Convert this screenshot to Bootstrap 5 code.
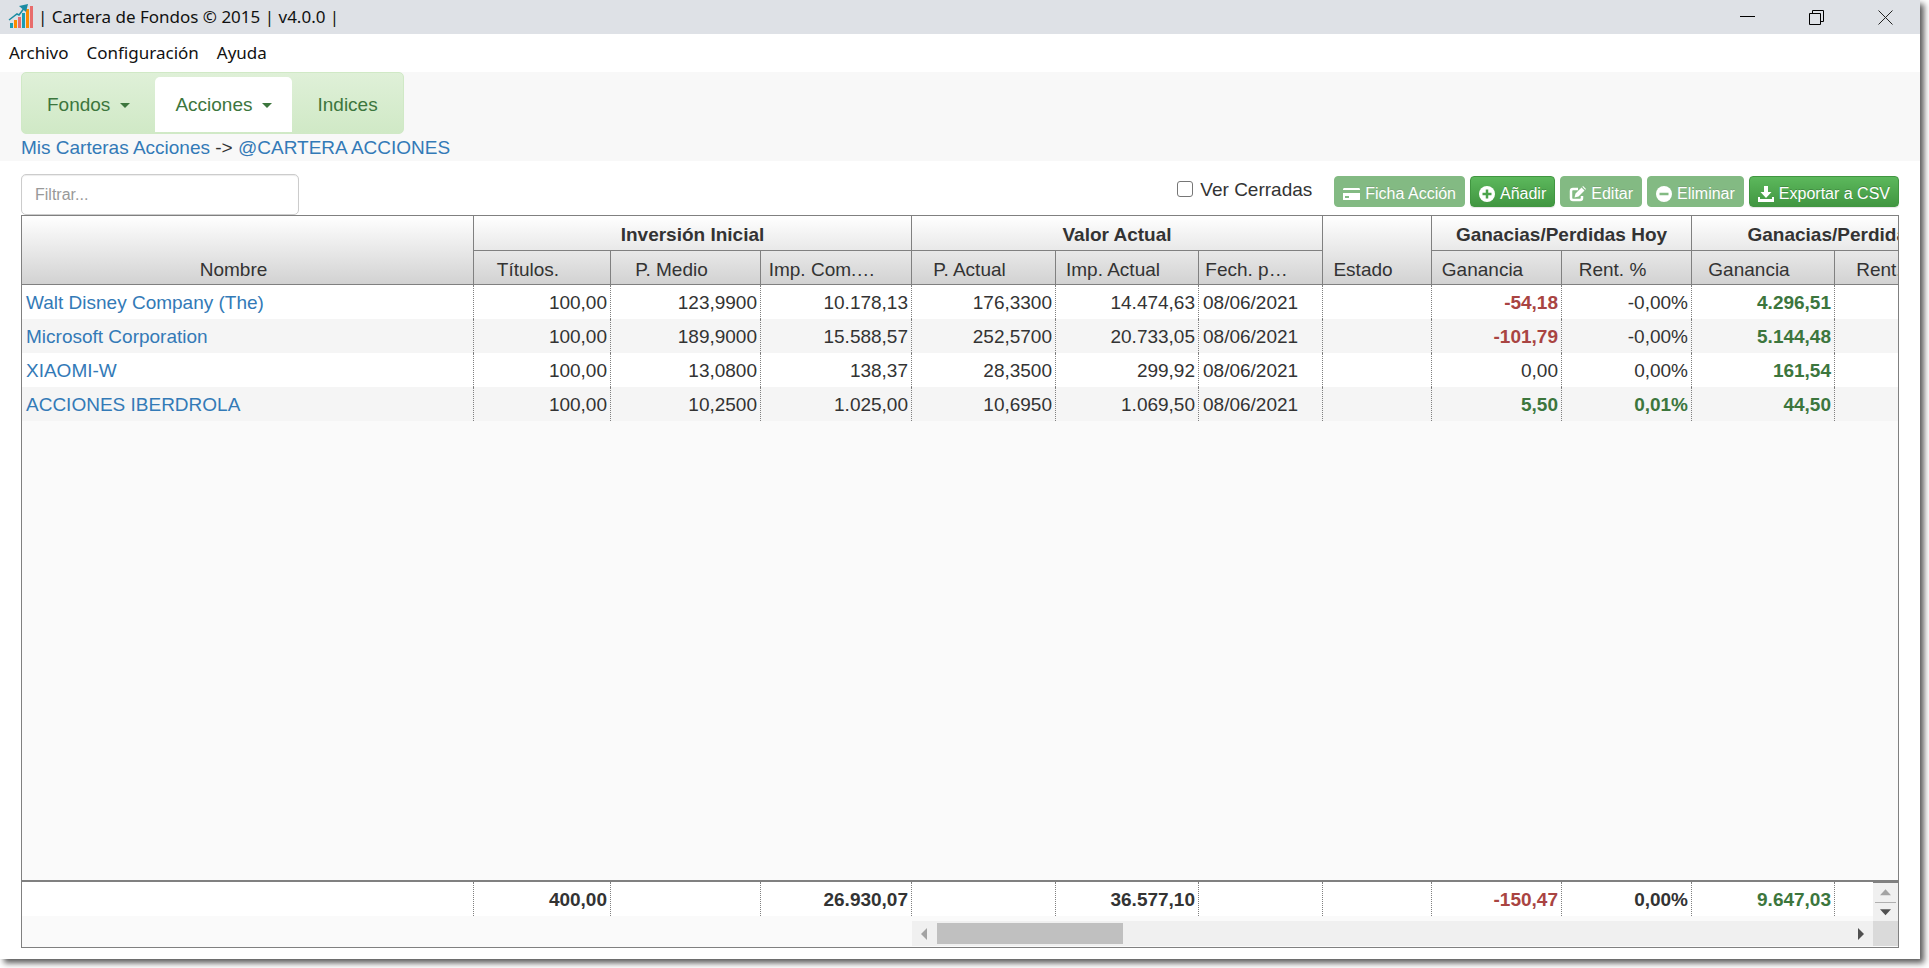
<!DOCTYPE html>
<html lang="es">
<head>
<meta charset="utf-8">
<meta name="viewport" content="width=device-width, initial-scale=1">
<title>Cartera de Fondos</title>
<link rel="stylesheet" href="https://cdn.jsdelivr.net/npm/bootstrap@5.3.0/dist/css/bootstrap.min.css">
<style>
  :root { --line: #808080; --ui: "Noto Sans", "Open Sans", sans-serif; }
  body { background: #fff; color: #333; font: 19px/27px "Liberation Sans", Arial, sans-serif; }
  a { color: #337ab7; text-decoration: none; }
  .app-frame { padding: 0 9px 9px 0; }
  .app-window { box-shadow: 4px 4px 6px rgba(0,0,0,.65); background: #fff; min-width: 0; }
  .title-bar { background: #dee1e6; height: 34px; padding-left: 8px; font: 17px/34px var(--ui); color: #111; }
  .win-btn { width: 69px; height: 34px; border: 0; background: none; padding: 0; line-height: 28px; }
  .menu-bar { height: 38px; padding-left: 9px; gap: 18px; font: 17px/38px var(--ui); }
  .menu-bar a { color: #111; }
  .nav-strip { background: #f8f8f8; height: 89px; padding-left: 21px; }
  .tab-set { border: 1px solid #d0e9c6; border-radius: 5px; background: linear-gradient(#dff0d8, #d0e9c6); height: 62px; padding-top: 4px; }
  .tab-set .nav-link { color: #3c763d; line-height: 27px; padding: 14px 25px; border-radius: 5px 5px 0 0; }
  .tab-set .nav-link.active { background: #fff; padding: 14px 20px; }
  .tab-set .dropdown-toggle::after { border-top-width: 5px; border-left-width: 5px; border-right-width: 5px; margin-left: 10px; vertical-align: 3px; }
  .work { padding: 13px 21px 11px; min-width: 0; }
  .filter-box { width: 278px; height: 41px; font-size: 16px; border-color: #ccc; border-radius: 5px; padding: 6px 13px; box-shadow: inset 0 1px 1px rgba(0,0,0,.075); }
  .filter-box::placeholder { color: #999; }
  .show-closed { height: 30px; gap: 7px; margin-right: 22px; }
  .show-closed .form-check-input { width: 16px; height: 16px; margin: 0; border-color: #767676; border-radius: 3px; }
  .tool-set { gap: 5px; padding-top: 2px; }
  .tool-btn { --bs-btn-color: #fff; --bs-btn-hover-color: #fff; --bs-btn-disabled-color: #fff; --bs-btn-border-color: #419641; --bs-btn-disabled-border-color: #419641; --bs-btn-disabled-opacity: .65;
    background: linear-gradient(#5cb85c, #419641); font-size: 16px; line-height: 19px; height: 31px; padding: 7px 8px 3px; border-radius: 4px; text-shadow: 0 -1px 0 rgba(0,0,0,.2); box-shadow: 0 1px 1px rgba(0,0,0,.1); gap: 5px; white-space: nowrap; }
  .tool-btn:disabled { background: #419641; box-shadow: none; }
  .data-grid { border: 1px solid var(--line); background: #fafafa; overflow: hidden; min-width: 0; }
  .data-grid table { table-layout: fixed; width: 1952px; border-collapse: separate; border-spacing: 0; }
  .grid-head { background: linear-gradient(#fff, #d2d2d2); border-bottom: 1px solid var(--line); }
  .grid-head th { height: 33px; padding: 0 34px 0 6px; font-weight: 400; text-align: center; vertical-align: bottom; line-height: 28px; border-right: 1px solid var(--line); white-space: nowrap; }
  .grid-head th.grp { height: 35px; padding: 0; font-weight: 700; line-height: 30px; border-bottom: 1px solid var(--line); }
  .grid-rows td { height: 34px; padding: 2px 3px 0 4px; line-height: 32px; text-align: right; border-right: 1px dotted var(--line); background: #fff; white-space: nowrap; }
  .grid-rows tr:nth-child(even) td { background: #f5f5f5; }
  .grid-rows td.txt { text-align: left; }
  .grid-rows td.up { color: #3c763d; font-weight: 700; }
  .grid-rows td.down { color: #a94442; font-weight: 700; }
  .grid-foot { border-top: 2px solid var(--line); }
  .foot-clip { overflow: hidden; min-width: 0; padding-bottom: 5px; }
  .v-bar { width: 25px; background: #f0f0f0; border-top: 1px solid var(--line); }
  .v-bar hr { margin: 0 2px; border-color: #a0a0a0; opacity: .8; }
  .h-row { height: 25px; margin-bottom: 1px; }
  .h-space { width: 890px; }
  .h-bar { background: #f0f0f0; gap: 10px; padding: 0 9px; }
  .h-thumb { width: 186px; height: 21px; background: #c0c0c0; }
  .h-end { width: 25px; background: #dadada; }
</style>
</head>
<body>
<div class="app-frame vh-100 d-flex">
<div class="app-window flex-grow-1 d-flex flex-column">
  <header class="title-bar d-flex align-items-center">
    <svg width="26" height="26" viewBox="0 0 26 26"><path fill="#1b9db3" d="M2 19h3v5H2zM14 9h3v15h-3z"/><path fill="#fb8c00" d="M6 16h3v8H6zM18 5h3v19h-3z"/><path fill="#e86c6c" d="M10 13h3v11h-3zM22 2h3v22h-3z"/><path d="M1 16L9 10 11 11 17 3" fill="none" stroke="#1b8ca3" stroke-width="1.500"/><path fill="#1b8ca3" d="M11 2l9-2-2 8z"/></svg>
    <span class="me-auto ps-1">| Cartera de Fondos © 2015 | v4.0.0 |</span>
    <button class="win-btn" aria-label="Minimizar"><svg width="16" height="16" viewBox="0 0 16 16"><path d="M0 6.500h15" stroke="#000" fill="none"/></svg></button>
    <button class="win-btn" aria-label="Restaurar"><svg width="16" height="16" viewBox="0 0 16 16"><path d="M.5 3.500h11v11h-11zM3.500 3.500v-3h11v11h-3" stroke="#000" fill="none"/></svg></button>
    <button class="win-btn" aria-label="Cerrar"><svg width="16" height="16" viewBox="0 0 16 16"><path d="M.5.5l14 14M14.500.5l-14 14" stroke="#222" fill="none"/></svg></button>
  </header>
  <nav class="menu-bar d-flex"><a href="#">Archivo</a><a href="#">Configuración</a><a href="#">Ayuda</a></nav>
  <div class="nav-strip">
    <ul class="nav tab-set d-inline-flex align-top">
      <li class="nav-item"><a class="nav-link dropdown-toggle" href="#">Fondos</a></li>
      <li class="nav-item"><a class="nav-link dropdown-toggle active" href="#">Acciones</a></li>
      <li class="nav-item"><a class="nav-link" href="#">Indices</a></li>
    </ul>
    <div><a href="#">Mis Carteras Acciones</a> -&gt; <a href="#">@CARTERA ACCIONES</a></div>
  </div>
  <main class="work flex-grow-1 d-flex flex-column">
    <div class="d-flex align-items-start">
      <input class="form-control filter-box me-auto" type="text" placeholder="Filtrar..." aria-label="Filtrar">
      <div class="show-closed d-flex align-items-center">
        <input class="form-check-input" type="checkbox" id="closed"><label for="closed">Ver Cerradas</label>
      </div>
      <div class="d-flex tool-set">
        <button class="btn tool-btn d-flex align-items-center" disabled><svg width="17" height="16" viewBox="0 0 17 16" fill="#fff"><path fill-rule="evenodd" d="M0 3.500Q0 2 1 2h15q1 0 1 1.500V4H0zM0 7h17v6.500q0 .5-1 .5H1q-1 0-1-.5zM2 10v2h4v-2z"/></svg>Ficha Acción</button>
        <button class="btn tool-btn d-flex align-items-center"><svg width="16" height="16" viewBox="0 0 16 16"><circle cx="8" cy="8" r="8" fill="#fff"/><path d="M8 3.500v9M3.500 8h9" stroke="#4ba34b" stroke-width="2.500"/></svg>Añadir</button>
        <button class="btn tool-btn d-flex align-items-center" disabled><svg width="17" height="16" viewBox="0 0 17 16"><path d="M9 3H4Q2 3 2 5v7q0 2 2 2h7q2 0 2-2v-2" fill="none" stroke="#fff" stroke-width="2.500"/><path d="M5.500 11.500l1-4L12.500 1.500l3 3-6 6zM13.300.8l.8-.8 3 3-.8.8z" fill="#fff"/></svg>Editar</button>
        <button class="btn tool-btn d-flex align-items-center" disabled><svg width="16" height="16" viewBox="0 0 16 16"><circle cx="8" cy="8" r="8" fill="#fff"/><path d="M3.500 8h9" stroke="#419641" stroke-width="2.500"/></svg>Eliminar</button>
        <button class="btn tool-btn d-flex align-items-center"><svg width="16" height="16" viewBox="0 0 16 16" fill="#fff"><path d="M6 0h4v6h3.500L8 12 2.500 6H6zM0 11h2v2h12v-2h2v5H0z"/></svg>Exportar a CSV</button>
      </div>
    </div>
    <section class="data-grid flex-grow-1 d-flex flex-column">
      <div class="grid-head">
        <table>
          <colgroup><col width="452"><col width="137"><col width="150"><col width="151"><col width="144"><col width="143"><col width="124"><col width="109"><col width="130"><col width="130"><col width="143"><col width="139"></colgroup>
          <thead>
            <tr><th rowspan="2">Nombre</th><th class="grp" colspan="3">Inversión Inicial</th><th class="grp" colspan="3">Valor Actual</th><th rowspan="2">Estado</th><th class="grp" colspan="2">Ganacias/Perdidas Hoy</th><th class="grp" colspan="2">Ganacias/Perdidas</th></tr>
            <tr><th>Títulos.</th><th>P. Medio</th><th>Imp. Com.…</th><th>P. Actual</th><th>Imp. Actual</th><th>Fech. p…</th><th>Ganancia</th><th>Rent. %</th><th>Ganancia</th><th>Rent. %</th></tr>
          </thead>
        </table>
      </div>
      <div class="grid-rows flex-grow-1">
        <table>
          <colgroup><col width="452"><col width="137"><col width="150"><col width="151"><col width="144"><col width="143"><col width="124"><col width="109"><col width="130"><col width="130"><col width="143"><col width="139"></colgroup>
          <tbody>
            <tr><td class="txt"><a href="#">Walt Disney Company (The)</a></td><td>100,00</td><td>123,9900</td><td>10.178,13</td><td>176,3300</td><td>14.474,63</td><td class="txt">08/06/2021</td><td></td><td class="down">-54,18</td><td>-0,00%</td><td class="up">4.296,51</td><td></td></tr>
            <tr><td class="txt"><a href="#">Microsoft Corporation</a></td><td>100,00</td><td>189,9000</td><td>15.588,57</td><td>252,5700</td><td>20.733,05</td><td class="txt">08/06/2021</td><td></td><td class="down">-101,79</td><td>-0,00%</td><td class="up">5.144,48</td><td></td></tr>
            <tr><td class="txt"><a href="#">XIAOMI-W</a></td><td>100,00</td><td>13,0800</td><td>138,37</td><td>28,3500</td><td>299,92</td><td class="txt">08/06/2021</td><td></td><td>0,00</td><td>0,00%</td><td class="up">161,54</td><td></td></tr>
            <tr><td class="txt"><a href="#">ACCIONES IBERDROLA</a></td><td>100,00</td><td>10,2500</td><td>1.025,00</td><td>10,6950</td><td>1.069,50</td><td class="txt">08/06/2021</td><td></td><td class="up">5,50</td><td class="up">0,01%</td><td class="up">44,50</td><td></td></tr>
          </tbody>
        </table>
      </div>
      <div class="grid-foot d-flex">
        <div class="foot-clip grid-rows flex-grow-1">
          <table class="fw-bold">
            <colgroup><col width="452"><col width="137"><col width="150"><col width="151"><col width="144"><col width="143"><col width="124"><col width="109"><col width="130"><col width="130"><col width="143"><col width="139"></colgroup>
            <tbody><tr><td></td><td>400,00</td><td></td><td>26.930,07</td><td></td><td>36.577,10</td><td></td><td></td><td class="down">-150,47</td><td>0,00%</td><td class="up">9.647,03</td><td></td></tr></tbody>
          </table>
        </div>
        <div class="v-bar d-flex flex-column flex-shrink-0">
          <svg class="w-100 flex-grow-1" height="18" viewBox="0 0 25 18"><path d="M7 12l5.500-6 5.500 6z" fill="#a3a3a3"/></svg>
          <hr>
          <svg class="w-100 flex-grow-1" height="18" viewBox="0 0 25 18"><path d="M7 6l5.500 6 5.500-6z" fill="#505050"/></svg>
        </div>
      </div>
      <div class="h-row d-flex">
        <div class="h-space flex-shrink-0"></div>
        <div class="h-bar flex-grow-1 d-flex align-items-center">
          <svg width="6" height="12" viewBox="0 0 6 12"><path d="M6 0v12L0 6z" fill="#a3a3a3"/></svg>
          <div class="h-thumb"></div>
          <svg class="ms-auto" width="6" height="12" viewBox="0 0 6 12"><path d="M0 0v12l6-6z" fill="#505050"/></svg>
        </div>
        <div class="h-end"></div>
      </div>
    </section>
  </main>
</div>
</div>
<script src="https://cdn.jsdelivr.net/npm/bootstrap@5.3.0/dist/js/bootstrap.bundle.min.js"></script>
</body>
</html>
